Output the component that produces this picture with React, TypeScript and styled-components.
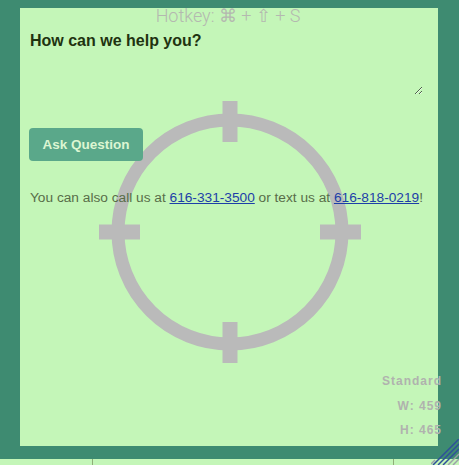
import React from 'react';
import styled, { createGlobalStyle } from 'styled-components';

const GlobalStyle = createGlobalStyle`
	html, body {
		margin: 0;
		padding: 0;
		background: #3e8b71;
		overflow: hidden;
	}
`;

const Page = styled.div`
	width: 459px;
	height: 465px;
	position: relative;
	display: flex;
	flex-direction: column;
	padding: 8px 0 0 20px;
	box-sizing: border-box;
`;

const Panel = styled.div`
	position: relative;
	width: 418px;
	height: 438px;
	background: #c4f6b8;
	box-sizing: border-box;
	padding: 0 10px;
	display: flex;
	flex-direction: column;
`;

const Hotkey = styled.div`
	position: relative;
	z-index: 1;
	height: 18px;
	line-height: 18px;
	margin-top: -1px;
	text-align: center;
	font-family: Roboto, 'Liberation Sans', sans-serif;
	font-weight: 300;
	font-size: 18px;
	color: #b4b8b0;
	margin-left: -2px;
`;

const Heading = styled.h2`
	position: relative;
	z-index: 1;
	margin: 6px 0 0;
	font-family: 'Liberation Sans', Arial, sans-serif;
	font-weight: 700;
	font-size: 16px;
	line-height: 20px;
	color: #1f3310;
`;

const Question = styled.textarea`
	position: relative;
	z-index: 1;
	margin: 4px 0 0;
	width: 393px;
	height: 40px;
	background: transparent;
	border: none;
	outline: none;
	padding: 0;
	font-family: 'Liberation Sans', Arial, sans-serif;
	font-size: 14px;
`;

const AskButton = styled.button`
	position: relative;
	z-index: 1;
	margin: 33px 0 0 -1px;
	width: 114px;
	height: 33px;
	border: none;
	border-radius: 4px;
	background: #5aa88a;
	color: #dcf6d2;
	font-family: 'Liberation Sans', Arial, sans-serif;
	font-weight: 700;
	font-size: 13.5px;
	cursor: pointer;
`;

const Contact = styled.p`
	position: relative;
	z-index: 1;
	margin: 28px 0 0;
	font-family: 'Liberation Sans', Arial, sans-serif;
	font-size: 13.7px;
	line-height: 18px;
	color: #586d48;
	white-space: nowrap;

	a {
		color: #1d3fa8;
		text-decoration: underline;
	}
`;

const Crosshair = styled.svg`
	position: absolute;
	left: 78px;
	top: 92px;
	width: 264px;
	height: 264px;
	z-index: 0;
	pointer-events: none;
`;

const SizeInfo = styled.div`
	position: absolute;
	right: -4px;
	top: 366px;
	display: flex;
	flex-direction: column;
	align-items: flex-end;
	gap: 10px;
	font-family: 'Liberation Sans', Arial, sans-serif;
	font-weight: 700;
	font-size: 12px;
	line-height: 14.5px;
	letter-spacing: 1px;
	color: #b0b2ae;
	z-index: 2;
`;

const BottomStrip = styled.div`
	margin: 13px 0 0 -20px;
	width: 459px;
	height: 6px;
	background: #c4f6b8;
	display: flex;
`;

const StripCell = styled.div<{ $w: number }>`
	width: ${(p) => p.$w}px;
	height: 100%;
	border-right: 1px solid #8fae78;
	box-sizing: border-box;
`;

const Hatch = styled.svg`
	position: absolute;
	right: 0;
	bottom: 0;
	width: 28px;
	height: 26px;
`;

export default function App() {
	return (
		<>
			<GlobalStyle />
			<Page>
				<Panel>
					<Crosshair viewBox="0 0 264 264">
						<circle cx="132" cy="132" r="112" fill="none" stroke="#bababa" strokeWidth="13" />
						<rect x="124.5" y="1" width="15" height="41" fill="#bababa" />
						<rect x="124.5" y="222" width="15" height="41" fill="#bababa" />
						<rect x="1" y="124.5" width="41" height="15" fill="#bababa" />
						<rect x="222" y="124.5" width="41" height="15" fill="#bababa" />
					</Crosshair>
					<Hotkey>Hotkey: ⌘ + ⇧ + S</Hotkey>
					<Heading>How can we help you?</Heading>
					<Question />
					<AskButton>Ask Question</AskButton>
					<Contact>
						You can also call us at <a href="#">616-331-3500</a> or text us at{' '}
						<a href="#">616-818-0219</a>!
					</Contact>
					<SizeInfo>
						<span>Standard</span>
						<span>W: 459</span>
						<span>H: 465</span>
					</SizeInfo>
				</Panel>
				<BottomStrip>
					<StripCell $w={93} />
					<StripCell $w={301} />
				</BottomStrip>
				<Hatch viewBox="0 0 28 26">
					<g stroke="#2f4f9a" strokeWidth="1.5">
						<line x1="2" y1="26" x2="28" y2="0" />
						<line x1="7" y1="26" x2="28" y2="5" />
						<line x1="12" y1="26" x2="28" y2="10" />
					</g>
					<g stroke="#9aa0a8" strokeWidth="1.5">
						<line x1="0" y1="25" x2="4" y2="21" />
						<line x1="17" y1="26" x2="28" y2="15" />
						<line x1="22" y1="26" x2="28" y2="20" />
					</g>
				</Hatch>
			</Page>
		</>
	);
}
